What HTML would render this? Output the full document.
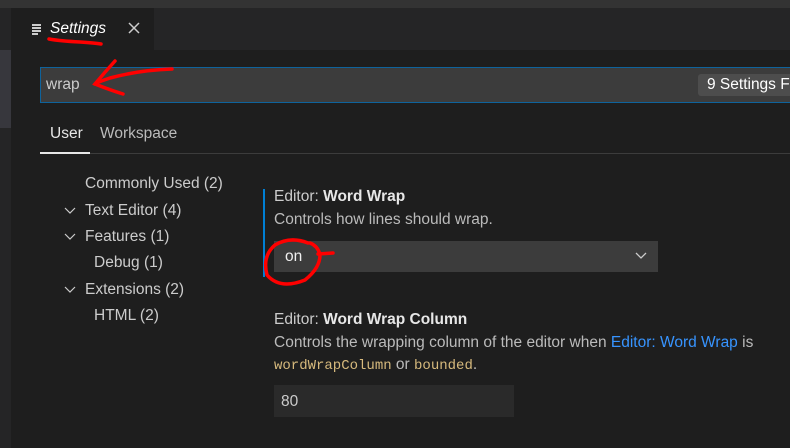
<!DOCTYPE html>
<html><head><meta charset="utf-8"><style>
*{margin:0;padding:0;box-sizing:border-box}
body{width:790px;height:448px;background:#1e1e1e;position:relative;overflow:hidden;font-family:"Liberation Sans",sans-serif;color:#ccc;font-size:15.5px}
.a{position:absolute;white-space:nowrap}
.c{position:absolute}
</style></head><body>
<div class="a" style="left:0;top:0;width:790px;height:8px;background:#333"></div>
<div class="a" style="left:0;top:8px;width:790px;height:42px;background:#252526"></div>
<div class="a" style="left:0;top:8px;width:11px;height:440px;background:#252526"></div>
<div class="a" style="left:0;top:50px;width:11px;height:78px;background:#37373d"></div>
<div class="a" style="left:11px;top:8px;width:143px;height:42px;background:#1e1e1e"></div>
<div class="a" style="left:32px;top:24px;width:9px;height:2px;background:#ccc;box-shadow:0 3px 0 #ccc,0 6px 0 #ccc"></div>
<div class="a" style="left:32px;top:33px;width:6px;height:2px;background:#ccc"></div>
<div class="a" style="left:50px;top:20px;font-style:italic;color:#fff;font-size:15.5px">Settings</div>
<svg class="a" style="left:128px;top:22px" width="12" height="12"><path d="M1 1L11 11M11 1L1 11" stroke="#ccc" stroke-width="1.5"/></svg>
<div class="a" style="left:40px;top:67px;width:760px;height:36px;background:#3c3c3c;border:1px solid #0e639c"></div>
<div class="a" style="left:46px;top:76px;color:#ccc">wrap</div>
<div class="a" style="left:698px;top:74px;width:100px;height:22px;background:#4d4d4d;border-radius:3px"></div>
<div class="a" style="left:707px;top:76px;color:#fff">9 Settings Fo</div>
<div class="a" style="left:50px;top:125px;color:#e7e7e7">User</div>
<div class="a" style="left:100px;top:125px;color:#bbb">Workspace</div>
<div class="a" style="left:40px;top:153px;width:750px;height:1px;background:#3c3c3c"></div>
<div class="a" style="left:40px;top:152px;width:50px;height:2px;background:#e7e7e7"></div>
<div class="a" style="left:85px;top:175px">Commonly Used (2)</div>
<svg class="c" style="left:64px;top:207px" width="12" height="8"><path d="M1 1l5 5 5-5" stroke="#ccc" stroke-width="1.2" fill="none"/></svg>
<div class="a" style="left:85px;top:202px">Text Editor (4)</div>
<svg class="c" style="left:64px;top:233px" width="12" height="8"><path d="M1 1l5 5 5-5" stroke="#ccc" stroke-width="1.2" fill="none"/></svg>
<div class="a" style="left:85px;top:228px">Features (1)</div>
<div class="a" style="left:94px;top:254px">Debug (1)</div>
<svg class="c" style="left:64px;top:286px" width="12" height="8"><path d="M1 1l5 5 5-5" stroke="#ccc" stroke-width="1.2" fill="none"/></svg>
<div class="a" style="left:85px;top:281px">Extensions (2)</div>
<div class="a" style="left:94px;top:307px">HTML (2)</div>
<div class="a" style="left:263px;top:189px;width:2px;height:88px;background:#007fd4"></div>
<div class="a" style="left:274px;top:188px;color:#ccc">Editor: <b style="color:#e7e7e7">Word Wrap</b></div>
<div class="a" style="left:274px;top:211px;color:#bbb">Controls how lines should wrap.</div>
<div class="a" style="left:274px;top:241px;width:384px;height:31px;background:#3c3c3c"></div>
<div class="a" style="left:285px;top:248px;color:#f0f0f0">on</div>
<svg class="a" style="left:634px;top:251px" width="14" height="10"><path d="M2 2l5 5 5-5" stroke="#ccc" stroke-width="1.3" fill="none"/></svg>
<div class="a" style="left:274px;top:311px;color:#ccc">Editor: <b style="color:#e7e7e7">Word Wrap Column</b></div>
<div class="a" style="left:274px;top:334px;color:#bbb">Controls the wrapping column of the editor when <span style="color:#3794ff">Editor: Word Wrap</span> is</div>
<div class="a" style="left:274px;top:356px;color:#bbb"><span style="font-family:'Liberation Mono',monospace;font-size:14px;color:#d7ba7d">wordWrapColumn</span> or <span style="font-family:'Liberation Mono',monospace;font-size:14px;color:#d7ba7d">bounded</span>.</div>
<div class="a" style="left:274px;top:385px;width:240px;height:32px;background:#2a2a2a"></div>
<div class="a" style="left:281px;top:393px;color:#ccc">80</div>
<svg class="a" style="left:0;top:0" width="790" height="448">
<g stroke="#f00" stroke-width="3.5" fill="none" stroke-linecap="round">
<path d="M49 39 Q60 41 80 42 Q95 43 101 44"/>
<path d="M172 69 Q140 70 110 78 Q98 82 95 84"/>
<path d="M115 61 Q105 72 95 84 Q110 90 123 94"/>
<path d="M308 243 Q290 236 275 245 Q262 256 267 275 Q280 290 305 280 Q320 268 320 255 Q318 246 310 243 M318 254 L333 253"/>
</g></svg>
</body></html>
